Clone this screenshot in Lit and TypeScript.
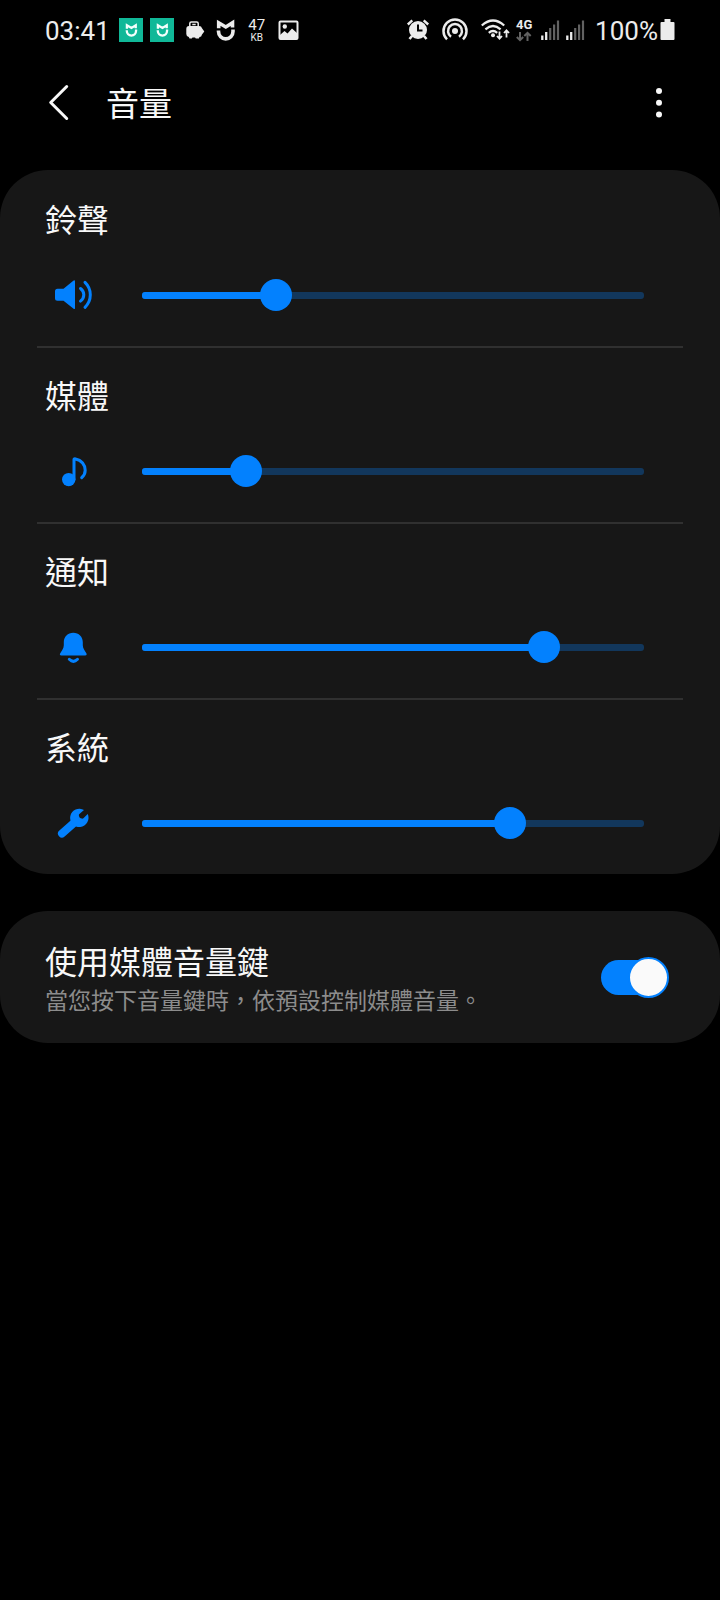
import { LitElement, html, css, svg } from "lit";
import { customElement, property, state } from "lit/decorators.js";

type VolumeKind = "ring" | "media" | "notification" | "system";

interface Channel {
  kind: VolumeKind;
  label: string;
  value: number;
}

const MAX = 150;

const icons = {
  ring: svg`
    <path d="M4.500 13.700H10.500L20.300 5.700Q22 4.600 22 6.500V32.900Q22 34.900 20.300 33.600L10.500 25.800H4.500Q2 25.800 2 23.300V16.200Q2 13.700 4.500 13.700Z" fill="currentColor"/>
    <path d="M27.500 13.500Q30.800 16 30.800 19.800T27.500 26.100M32 7.300Q37.300 12.400 37.300 19.800T32 32.300" fill="none" stroke="currentColor" stroke-width="3" stroke-linecap="round"/>`,
  media: svg`
    <circle cx="15.700" cy="28.600" r="6.700" fill="currentColor"/>
    <path d="M21 28.500V8.600Q21 7.700 22.500 7.900C28.500 9 32.200 14 32.200 19.200Q32.200 23.400 28.700 26.700" fill="none" stroke="currentColor" stroke-width="3" stroke-linecap="round"/>`,
  notification: svg`
    <path d="M20.300 5.700C25.800 5.700 29.800 9.800 29.800 15.200V18.200C29.800 21.600 31.900 23.700 33.500 26.500Q34.300 28.400 32.300 28.400H8.300Q6.300 28.400 7.100 26.500C8.700 23.700 10.800 21.600 10.800 18.200V15.200C10.800 9.800 14.800 5.700 20.300 5.700Z" fill="currentColor"/>
    <path d="M16.300 32.300Q20.400 36.300 24.500 32.300" fill="none" stroke="currentColor" stroke-width="3" stroke-linecap="round"/>`,
  system: svg`
    <path d="M9 30.500L22 19" stroke="currentColor" stroke-width="8" stroke-linecap="round"/>
    <path d="M31 6.900A9.200 9.200 0 1 0 34.700 11L30.400 15.200Q29.700 15.900 28.700 15.600L27.200 15.100Q26.500 14.800 26.300 14.100L25.900 12.500Q25.700 11.700 26.400 11.100Z" fill="currentColor"/>`,
};

@customElement("status-bar")
class StatusBar extends LitElement {
  static styles = css`
    :host {
      display: flex;
      justify-content: space-between;
      align-items: center;
      height: 60px;
      padding: 0 45px;
      color: #ececec;
      font-family: Roboto, sans-serif;
    }
    .group {
      display: flex;
      align-items: center;
      gap: 7px;
    }
    .right {
      gap: 5px;
    }
    .time,
    .level {
      padding-top: 2px;
      font-size: 26px;
      line-height: 32px;
    }
    .time {
      padding-right: 2px;
    }
    .power {
      display: flex;
      align-items: center;
      gap: 2px;
      padding-left: 5px;
    }
    svg {
      display: block;
      flex: none;
    }
    .speed {
      display: grid;
      width: 28px;
      padding-top: 2px;
      text-align: center;
    }
    .rate {
      font-size: 15px;
      line-height: 14px;
    }
    .unit {
      font-size: 10px;
      line-height: 12px;
    }
    .cell {
      display: grid;
      justify-items: center;
      width: 18px;
      margin-right: 2px;
      font-size: 13px;
      font-weight: 700;
      line-height: 12px;
    }
  `;

  private shield(color: string) {
    return svg`<path d="M2.200 8.300V2.800L9.300 7L16 2.800V7.600M2 10.500V11.500A7.200 7.300 0 0 0 16.500 11.500V9.500" fill="none" stroke=${color} stroke-width="3.600" />`;
  }

  private badge() {
    return html`<svg width="24" height="24" viewBox="0 0 24 24" aria-hidden="true">
      <rect width="24" height="24" fill="#10b898" />
      <g transform="translate(6.500 5.500) scale(.64)">${this.shield("#f4fffc")}</g>
    </svg>`;
  }

  private signal() {
    return html`<svg width="20" height="24" viewBox="0 0 20 24" aria-hidden="true">
      <path d="M2.300 17.500V22M6.200 14V22" stroke="#ececec" stroke-width="2.300" />
      <path d="M10.200 10V22M14.100 6.500V22M18 2.500V22" stroke="#626262" stroke-width="2.200" />
    </svg>`;
  }

  render() {
    return html`
      <div class="group">
        <span class="time">03:41</span>
        ${this.badge()} ${this.badge()}
        <svg width="28" height="24" viewBox="0 0 28 24" aria-hidden="true">
          <path d="M8.800 9V5.500Q8.800 4 10.300 4H15.700Q17.200 4 17.200 5.500V9M11.300 6.500H14.700" fill="none" stroke="#ececec" stroke-width="1.500" />
          <path d="M8 8H18Q20.500 8 21 10.200L23.300 13.500L21 16.500Q20.500 19 18.500 19L17.800 20.500H14.800L14 19.500H11.500L10.800 20.500H8.500L7.800 19Q5.300 18.500 5.300 16V11Q5.300 8 8 8Z" fill="#ececec" />
        </svg>
        <svg width="20" height="24" viewBox="0 0 20 24" aria-hidden="true">
          <g transform="translate(.500 2)">${this.shield("#ececec")}</g>
        </svg>
        <span class="speed"><span class="rate">47</span><span class="unit">KB</span></span>
        <svg width="21" height="24" viewBox="0 0 21 24" aria-hidden="true">
          <rect x="1.500" y="3.500" width="18" height="17.500" rx="1" fill="none" stroke="#ececec" stroke-width="2" />
          <circle cx="6.800" cy="8.500" r="2.200" fill="#ececec" />
          <path d="M2 17L6.500 13L9.500 15.500L14 10.500L19 15V20H2Z" fill="#ececec" />
        </svg>
      </div>
      <div class="group right">
        <svg width="30" height="24" viewBox="0 0 30 24" aria-hidden="true">
          <circle cx="14" cy="12" r="9" fill="#ececec" />
          <path d="M3.800 6.500L8.300 2.300M24.200 6.500L19.700 2.300" stroke="#ececec" stroke-width="2.400" />
          <path d="M8 18L5.500 21M20 18L22.500 21" stroke="#ececec" stroke-width="2.600" />
          <path d="M14 6.500V12.500H18.500" fill="none" stroke="#000" stroke-width="2" />
        </svg>
        <svg width="36" height="24" viewBox="0 0 36 24" aria-hidden="true">
          <circle cx="16" cy="13" r="3" fill="#ececec" />
          <path d="M12 18.800A7 7 0 1 1 20 18.800M8 21.300A11.500 11.500 0 1 1 24 21.300" fill="none" stroke="#ececec" stroke-width="2.500" />
        </svg>
        <svg width="30" height="24" viewBox="0 0 30 24" aria-hidden="true">
          <path d="M1.800 7.500Q13 -2.500 24.200 7.500M5.400 11.300Q13 4.700 20.600 11.300M8.800 14.800Q13 11.200 17.200 14.800" fill="none" stroke="#ececec" stroke-width="2.300" />
          <circle cx="13" cy="17.300" r="2" fill="#ececec" />
          <path d="M19.500 13.500V20.500M17 18L19.500 20.700L22 18M26.500 19.500V12.500M24 15L26.500 12.300L29 15" fill="none" stroke="#ececec" stroke-width="1.800" />
        </svg>
        <span class="cell">
          <span>4G</span>
          <svg width="16" height="11" viewBox="0 0 16 11" aria-hidden="true">
            <path d="M4 1V9M.800 6L4 9.200L7.200 6M11.500 10V2M8.300 5L11.500 1.800L14.700 5" fill="none" stroke="#626262" stroke-width="2" />
          </svg>
        </span>
        ${this.signal()} ${this.signal()}
        <span class="power">
          <span class="level">100%</span>
          <svg width="15" height="24" viewBox="0 0 15 24" aria-hidden="true">
            <path d="M4.500 1H10.500V4H13.500Q14.500 4 14.500 5V21Q14.500 22 13.500 22H1.500Q.500 22 .500 21V5Q.500 4 1.500 4H4.500Z" fill="#ececec" />
          </svg>
        </span>
      </div>
    `;
  }
}

@customElement("volume-row")
class VolumeRow extends LitElement {
  static styles = css`
    :host {
      display: block;
    }
    .label {
      display: block;
      padding: 23px 45px 0;
      font-size: 32px;
      line-height: 50px;
      color: #f8f8f8;
    }
    .control {
      display: flex;
      align-items: center;
      gap: 33px;
      padding: 32px 60px 31px 53px;
    }
    .icon {
      flex: none;
      display: block;
      color: #0381fe;
    }
    .slider {
      flex: 1;
      display: grid;
      align-items: center;
    }
    .slider > * {
      grid-area: 1 / 1;
    }
    .track {
      height: 7px;
      margin: 0 16px;
      border-radius: 3px;
      background: #12375c;
      overflow: hidden;
    }
    .fill {
      height: 100%;
      background: #0381fe;
    }
    .range {
      appearance: none;
      width: 100%;
      height: 32px;
      margin: 0;
      background: none;
      z-index: 1;
    }
    .range::-webkit-slider-thumb {
      appearance: none;
      width: 32px;
      height: 32px;
      border: 0;
      border-radius: 50%;
      background: #0381fe;
    }
  `;

  @property() kind: VolumeKind = "ring";
  @property() label = "";
  @property({ type: Number }) value = 0;

  private onInput(e: Event) {
    this.value = Number((e.target as HTMLInputElement).value);
  }

  render() {
    return html`
      <label class="label" for="range">${this.label}</label>
      <div class="control">
        <svg class="icon" width="40" height="40" viewBox="0 0 40 40" aria-hidden="true">${icons[this.kind]}</svg>
        <div class="slider">
          <div class="track"><div class="fill" style="width:${(this.value / MAX) * 100}%"></div></div>
          <input class="range" id="range" type="range" min="0" max=${MAX} .value=${String(this.value)} @input=${this.onInput} />
        </div>
      </div>
    `;
  }
}

@customElement("app-root")
class AppRoot extends LitElement {
  static styles = css`
    :host {
      display: block;
      min-height: 100vh;
      background: #000;
      color: #f8f8f8;
      font-family: "Noto Sans CJK TC", sans-serif;
    }
    .header {
      display: flex;
      align-items: center;
      height: 86px;
      margin-bottom: 24px;
      padding: 0 41px;
    }
    .button {
      flex: none;
      width: 40px;
      height: 48px;
      padding: 0;
      border: 0;
      background: none;
      color: inherit;
    }
    .button svg {
      display: block;
    }
    .title {
      flex: 1;
      margin: 0 0 2px 25px;
      font-size: 33px;
      font-weight: 400;
      line-height: 48px;
    }
    .card {
      border-radius: 48px;
      background: #171717;
    }
    .divider {
      height: 2px;
      margin: 0 37px -2px;
      border: 0;
      background: #303030;
    }
    .setting {
      display: flex;
      align-items: center;
      justify-content: space-between;
      gap: 24px;
      margin-top: 37px;
      padding: 25px 51px 25px 45px;
    }
    .text {
      padding-bottom: 4px;
    }
    .name {
      display: block;
      font-size: 32px;
      line-height: 48px;
    }
    .hint {
      display: block;
      font-size: 23px;
      line-height: 30px;
      color: #8c8c8c;
    }
    .switch {
      appearance: none;
      flex: none;
      display: grid;
      align-items: center;
      width: 68px;
      height: 41px;
      margin: 0;
    }
    .switch::before,
    .switch::after {
      content: "";
      grid-area: 1 / 1;
      box-sizing: border-box;
    }
    .switch::before {
      height: 35px;
      margin-right: 4px;
      border-radius: 18px;
      background: #5a5a5a;
    }
    .switch::after {
      width: 41px;
      height: 41px;
      border: 2px solid #5a5a5a;
      border-radius: 50%;
      background: #fafafa;
    }
    .switch:checked::before {
      background: #0381fe;
    }
    .switch:checked::after {
      justify-self: end;
      border-color: #0381fe;
    }
  `;

  @state() private channels: Channel[] = [
    { kind: "ring", label: "鈴聲", value: 40 },
    { kind: "media", label: "媒體", value: 31 },
    { kind: "notification", label: "通知", value: 120 },
    { kind: "system", label: "系統", value: 110 },
  ];

  render() {
    return html`
      <status-bar></status-bar>
      <header class="header">
        <button class="button" aria-label="返回">
          <svg width="40" height="48" viewBox="0 0 40 48" aria-hidden="true">
            <path d="M25.700 7.500L9.700 23.500L25.700 39.500" fill="none" stroke="currentColor" stroke-width="3" stroke-linecap="round" stroke-linejoin="round" />
          </svg>
        </button>
        <h1 class="title">音量</h1>
        <button class="button" aria-label="更多選項">
          <svg width="40" height="48" viewBox="0 0 40 48" aria-hidden="true" fill="currentColor">
            <circle cx="20" cy="12" r="3" /><circle cx="20" cy="23.700" r="3" /><circle cx="20" cy="35.400" r="3" />
          </svg>
        </button>
      </header>
      <main>
        <section class="card">
          ${this.channels.map(
            (c, i) => html`
              ${i ? html`<hr class="divider" />` : ""}
              <volume-row .kind=${c.kind} .label=${c.label} .value=${c.value}></volume-row>
            `,
          )}
        </section>
        <section class="card setting">
          <label class="text" for="media-keys">
            <span class="name">使用媒體音量鍵</span>
            <span class="hint">當您按下音量鍵時，依預設控制媒體音量。</span>
          </label>
          <input class="switch" id="media-keys" type="checkbox" role="switch" checked />
        </section>
      </main>
    `;
  }
}
